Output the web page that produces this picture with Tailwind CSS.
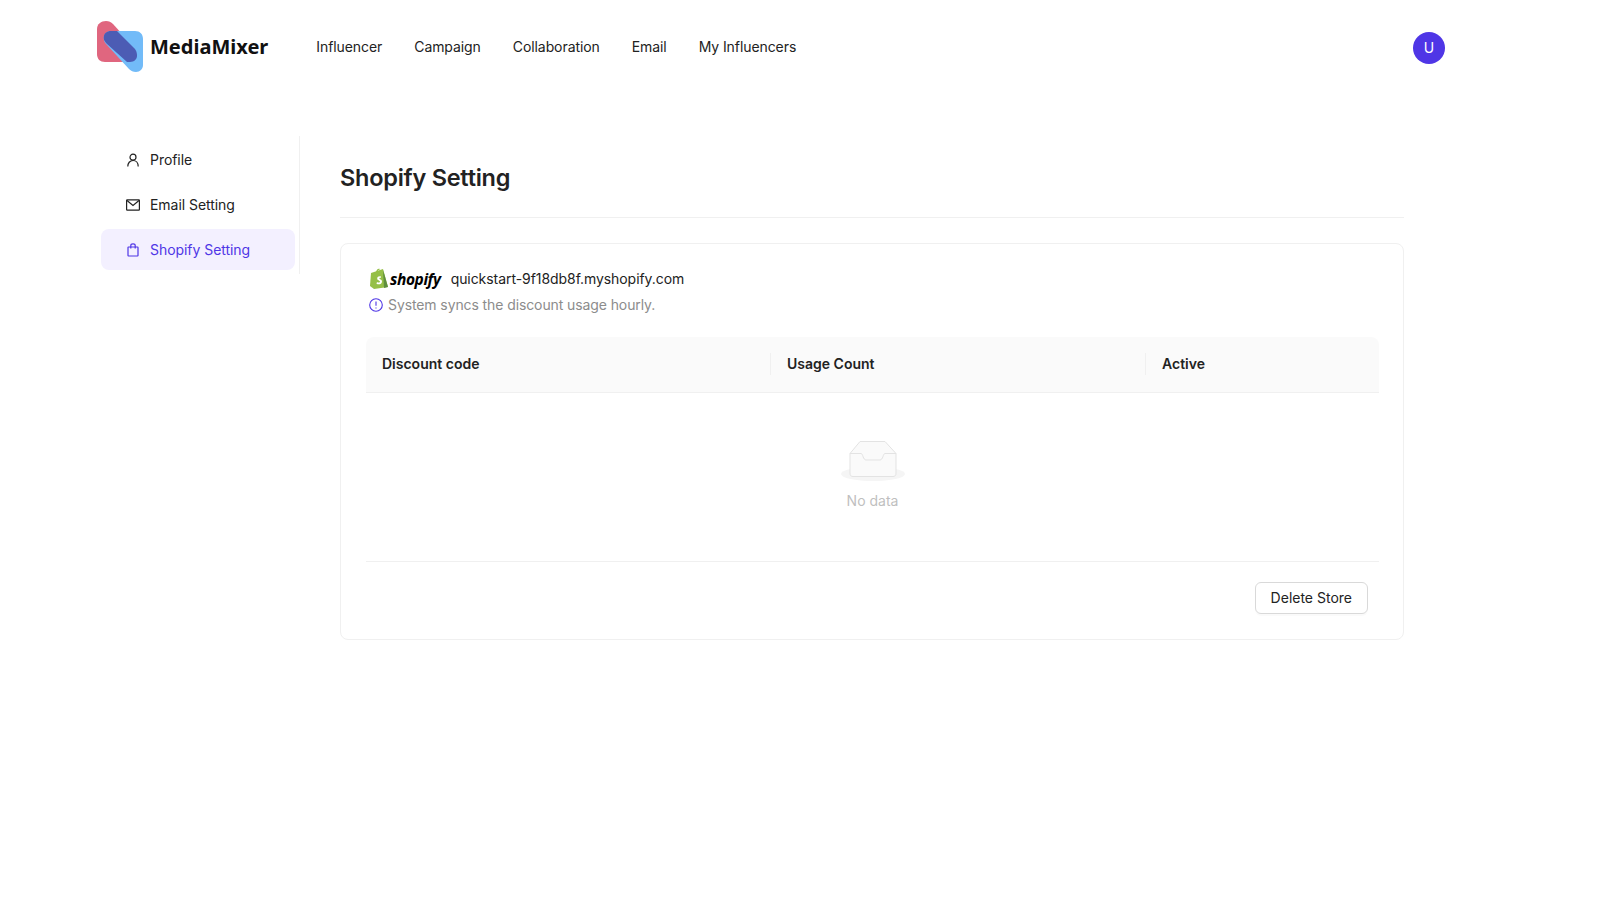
<!DOCTYPE html>
<html lang="en">
<head>
  <meta charset="UTF-8">
  <meta name="viewport" content="width=device-width, initial-scale=1.0">
  <title>Shopify Setting</title>
  <script src="https://cdn.jsdelivr.net/npm/@tailwindcss/browser@4"></script>
</head>
<body class="bg-white h-[900px] overflow-hidden font-['Inter',sans-serif] text-sm text-[#222]">
<header class="h-[96px] pl-[97px] flex items-center relative">
  <svg width="46" height="51" viewBox="0 0 46 51" class="mt-[-4px]">
    <path d="M0 8C0 3 4 0 9 0C12 0 14 1 16 3L36 25C39 29 40 32 40 35C40 38 37 41 33 41H8C3 41 0 38 0 33Z" fill="#e0667f"/>
    <path d="M6.7 17C6.7 13 10 10 14 10H38C43 10 46 13 46 18V44C46 48 43 51 39 51C36 51 34 50 32 48L10 24C8 22 6.7 20 6.7 17Z" fill="#72bbf8"/>
    <path d="M6.7 17C6.7 12 10 10 14 10H20L38 28C40 31 40 33 40 35C40 38 37 41 33 41H30L10 23C8 21 6.7 19 6.7 17Z" fill="#4c5cb4"/>
  </svg>
  <span class="ml-[7px] mt-[-1px] text-[20px] font-bold text-[#111] font-['Noto_Sans',sans-serif]">MediaMixer</span>
  <nav class="ml-[48px] mt-[-3px] flex gap-[32px] tracking-[-0.08px]">
    <a>Influencer</a>
    <a>Campaign</a>
    <a>Collaboration</a>
    <a>Email</a>
    <a>My Influencers</a>
  </nav>
  <div class="absolute left-[1413px] top-[32px] w-8 h-8 rounded-full bg-[#4f36e6] text-white flex items-center justify-center">U</div>
</header>
<div class="flex pt-[40px] pl-[101px]">
  <aside class="w-[199px] h-[138px] border-r border-[#f0f0f0] shrink-0 pt-[3px]">
    <div class="w-[194px] flex flex-col gap-1 tracking-[-0.05px]">
      <a class="h-[41px] pl-[25px] rounded-lg flex items-center gap-[10px]">
        <svg width="14" height="14" viewBox="0 0 14 14" fill="none" stroke="#222" stroke-width="1.2"><circle cx="7" cy="4.2" r="3"/><path d="M1.8 13.4c0-3.2 2-5.9 5.2-5.9s5.2 2.7 5.2 5.9"/></svg>
        Profile
      </a>
      <a class="h-[41px] pl-[25px] rounded-lg flex items-center gap-[10px]">
        <svg width="14" height="14" viewBox="0 0 14 14" fill="none" stroke="#222" stroke-width="1.2"><rect x="0.6" y="1.8" width="12.8" height="10.4" rx="0.6"/><path d="M1 2.5l6 5 6-5"/></svg>
        Email Setting
      </a>
      <a class="h-[41px] pl-[25px] rounded-lg flex items-center gap-[10px] bg-[#f3f0ff] text-[#4f36e6]">
        <svg width="14" height="14" viewBox="0 0 14 14" fill="none" stroke="#4f36e6" stroke-width="1.2"><rect x="2" y="4" width="10" height="9" rx="0.5"/><path d="M4.8 5.6V2.6C4.8 1.4 5.6 0.8 7 0.8s2.2 0.6 2.2 1.8v3"/></svg>
        Shopify Setting
      </a>
    </div>
  </aside>
  <main class="ml-[40px] w-[1064px]">
    <h1 class="h-[82px] pt-[26px] border-b border-[#f0f0f0] text-[23.5px] tracking-[-0.25px] leading-[32px] font-semibold">Shopify Setting</h1>
    <section class="mt-[25px] h-[397px] border border-[#f0f0f0] rounded-lg pl-[25px] pr-[24px] pt-[23px]">
      <div class="flex items-center h-[24px]">
        <svg width="20" height="21" viewBox="0 0 20 21" class="ml-[4px] mt-[-2px]"><path d="M1 5L13 1L18 19L4 21L0 18Z" fill="#95bf47"/><path d="M13 2L18 19L14 20Z" fill="#5e8e3e"/><path d="M6 5C6 2 8 0 10 1L9 2C8 2 7 4 7 5Z" fill="#95bf47"/><path d="M11 8.5C9 7.8 7.2 8.8 7.2 10.4C7.2 12.4 10 12.3 10 13.7C10 14.6 8.5 14.8 7 14L6.5 15.7C8.6 16.8 12 16.2 12 13.4C12 11.2 9.3 11.4 9.3 10.3C9.3 9.7 10 9.6 10.8 10Z" fill="#fff"/></svg>
        <span class="text-[15.5px] font-bold italic tracking-[-0.4px] text-black font-['Open_Sans',sans-serif]">shopify</span>
        <span class="ml-[10px] tracking-[-0.06px]">quickstart-9f18db8f.myshopify.com</span>
      </div>
      <div class="flex items-center h-[22px] mt-[3px] text-[#8c8c8c] tracking-[-0.1px]">
        <svg width="14" height="14" viewBox="0 0 14 14" fill="none" stroke="#4f36e6" stroke-width="1.1" class="ml-[3px] mr-[5px]"><circle cx="7" cy="7" r="6.3"/><path d="M7 3.6v4.2M7 9.4v1.1"/></svg>
        System syncs the discount usage hourly.
      </div>
      <div class="mt-[21px]">
        <div class="h-[56px] pb-[2px] grid grid-cols-[405px_375px_1fr] items-center bg-[#fafafa] rounded-t-lg border-b border-[#f0f0f0] font-semibold">
          <div class="pl-4 border-r border-[#f0f0f0] h-[22px] leading-[22px]">Discount code</div>
          <div class="pl-4 border-r border-[#f0f0f0] h-[22px] leading-[22px]">Usage Count</div>
          <div class="pl-4 h-[22px] leading-[22px]">Active</div>
        </div>
        <div class="h-[169px] border-b border-[#f0f0f0] flex flex-col items-center pt-[48px]">
          <svg width="64" height="41" viewBox="0 0 64 41" fill="none">
            <ellipse cx="32" cy="33" rx="32" ry="7" fill="#f5f5f5"/>
            <path d="M9 12.5L19 0.5H44L55 12.5V32C55 34.5 54 35.5 52 35.5H12C10 35.5 9 34.5 9 32Z" fill="#fafafa" stroke="#e3e3e3"/>
            <path d="M9 12.5H20C22 12.5 22 19 25 19H39C42 19 42 12.5 44 12.5H55" stroke="#e3e3e3"/>
          </svg>
          <div class="mt-[9px] text-[#bfbfbf]">No data</div>
        </div>
        <div class="flex justify-end pr-[11px] pt-[20px]">
          <button class="h-8 px-[15px] bg-white border border-[#d9d9d9] rounded-md shadow-[0_2px_0_rgba(0,0,0,0.02)]">Delete Store</button>
        </div>
      </div>
    </section>
  </main>
</div>
</body>
</html>
